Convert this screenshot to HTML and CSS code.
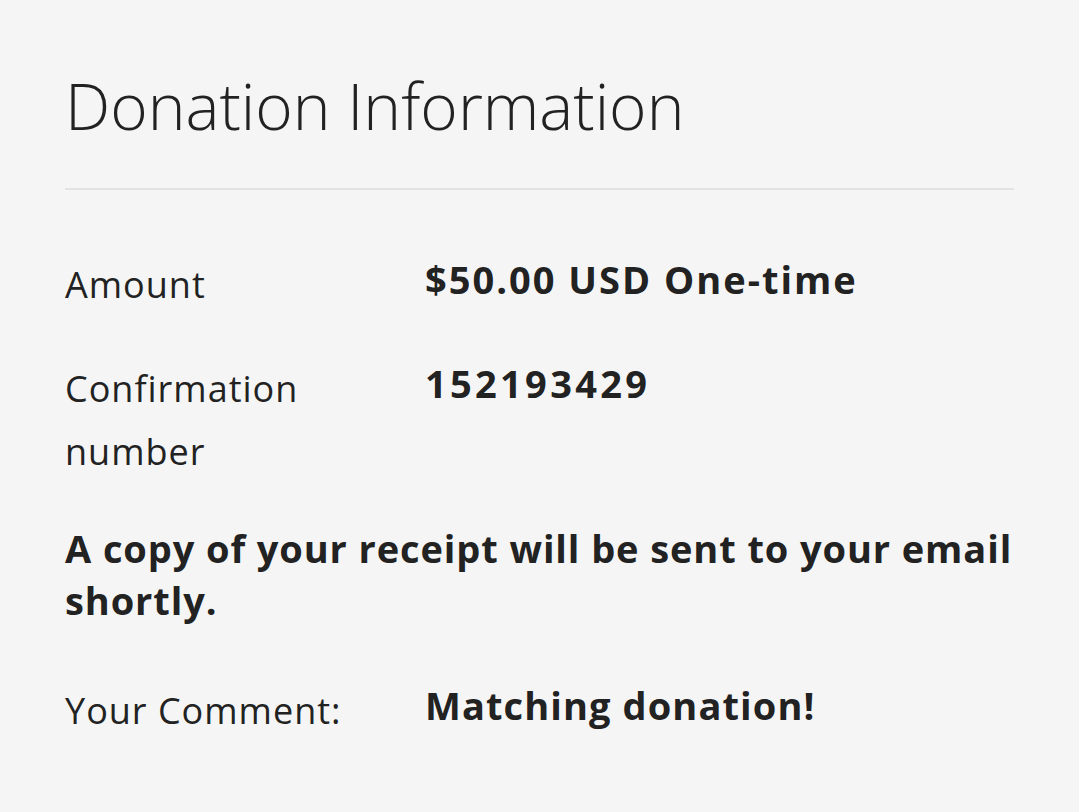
FILE: index.html
```html
<!DOCTYPE html>
<html lang="en">
<head>
<meta charset="utf-8">
<title>Donation Information</title>
<link rel="stylesheet" href="styles.css">
</head>
<body>
<main class="panel">
  <h1 class="title">Donation Information</h1>
  <dl class="details">
    <div class="row">
      <dt class="label">Amount</dt>
      <dd class="value value-amount">$50.00 USD One-time</dd>
    </div>
    <div class="row">
      <dt class="label">Confirmation number</dt>
      <dd class="value value-number">152193429</dd>
    </div>
  </dl>
  <p class="notice">A copy of your receipt will be sent to your email shortly.</p>
  <dl class="details comment">
    <div class="row">
      <dt class="label">Your Comment:</dt>
      <dd class="value">Matching donation!</dd>
    </div>
  </dl>
</main>
</body>
</html>
```

FILE: styles.css
```css
html, body {
  margin: 0;
  padding: 0;
  background: #f5f5f5;
}

body {
  font-family: "Open Sans", "Noto Sans", sans-serif;
  color: #222222;
  font-variant-ligatures: none;
}

.panel {
  padding: 66px 65px 0 65px;
  width: 949px;
}

.title {
  margin: 0;
  font-size: 64px;
  line-height: 80px;
  font-weight: 300;
  padding-bottom: 42px;
  border-bottom: 2px solid #e3e3e3;
}

.details {
  margin: 63px 0 0 0;
  display: flex;
  flex-direction: column;
  gap: 41px;
}

.row {
  display: grid;
  grid-template-columns: 360px 1fr;
}

.label {
  margin: 0;
  font-size: 36px;
  line-height: 63px;
  font-weight: 400;
  letter-spacing: 1px;
  width: 300px;
}

.value {
  margin: 0;
  font-size: 38px;
  line-height: 53px;
  font-weight: 700;
  letter-spacing: 1.1px;
}

.value-amount {
  letter-spacing: 2px;
}

.value-number {
  letter-spacing: 3.3px;
}

.notice {
  margin: 39px 0 0 0;
  font-size: 38px;
  line-height: 52px;
  font-weight: 700;
  letter-spacing: 0.9px;
}

.comment {
  margin-top: 53px;
}
```
